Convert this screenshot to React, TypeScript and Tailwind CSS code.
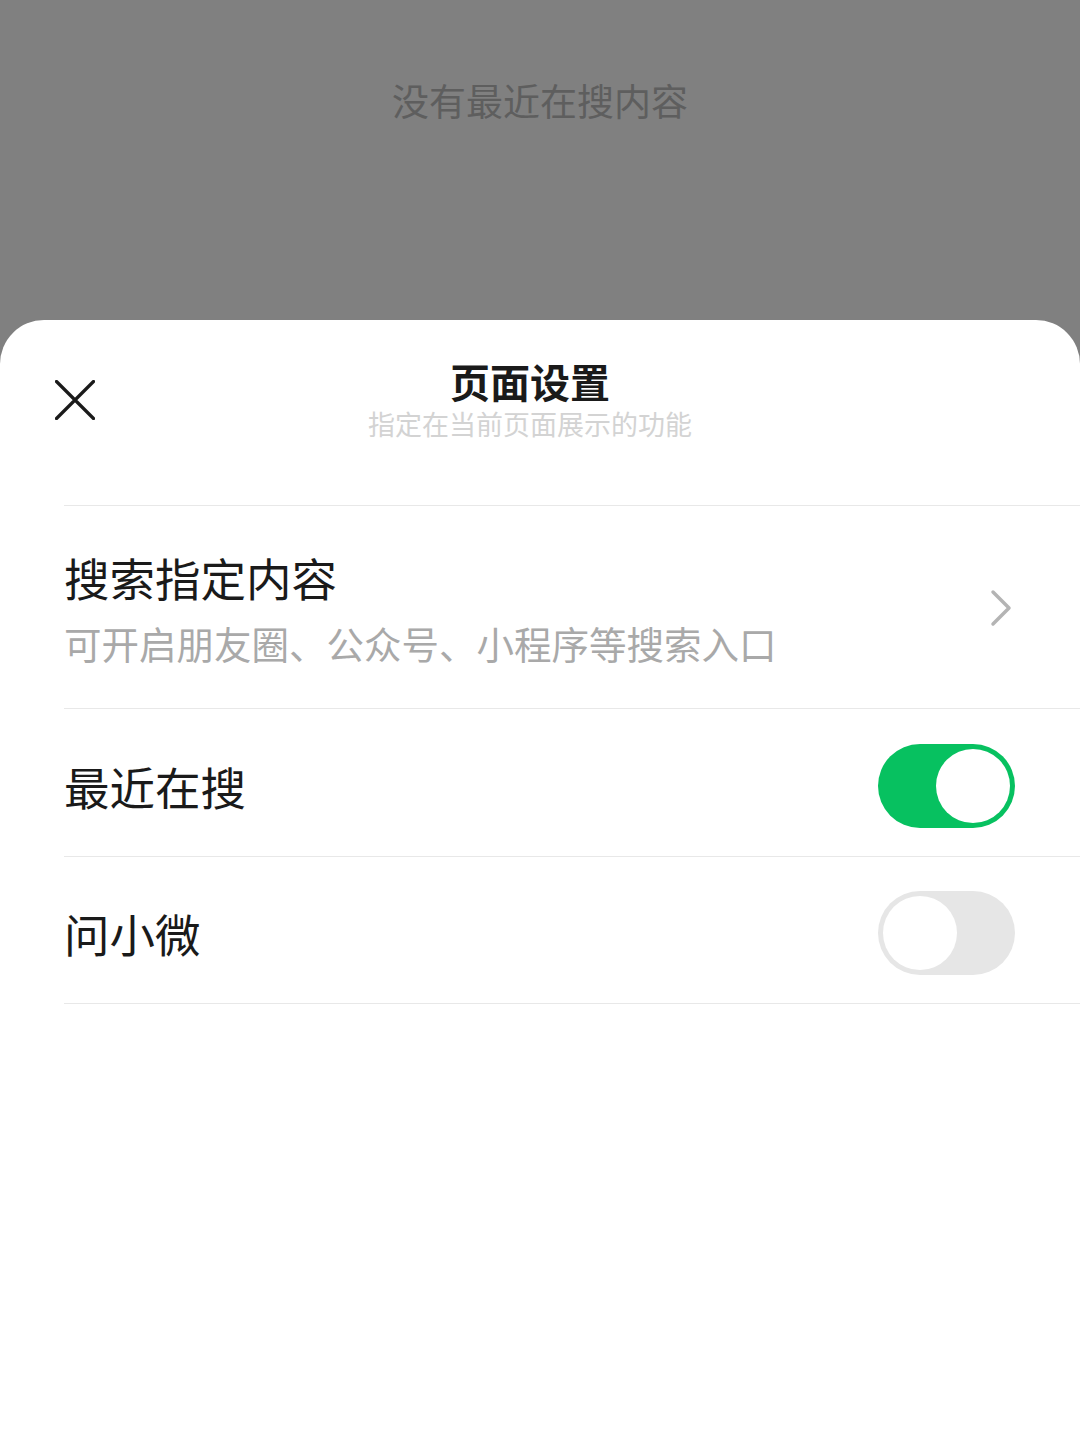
import { useState } from "react";

function Toggle({ on, onChange }: { on: boolean; onChange: () => void }) {
  return (
    <button
      onClick={onChange}
      aria-pressed={on}
      className={`flex h-[84px] w-[137px] shrink-0 items-center rounded-full p-[5px] ${
        on ? "justify-end bg-[#07c160]" : "justify-start bg-[#e6e6e6]"
      }`}
    >
      <span className="block h-[74px] w-[74px] rounded-full bg-white" />
    </button>
  );
}

export default function App() {
  const [recent, setRecent] = useState(true);
  const [askWei, setAskWei] = useState(false);

  return (
    <div className="flex min-h-[1440px] flex-col bg-[#808080] font-['Noto_Sans_CJK_SC',sans-serif]">
      {/* Dimmed page behind the sheet */}
      <div className="h-[320px] pt-[74px] text-center text-[37px] leading-[52px] text-[#5e5e5e]">
        没有最近在搜内容
      </div>

      {/* Bottom sheet */}
      <div className="flex-1 rounded-t-[44px] bg-white">
        {/* Header */}
        <div className="flex h-[185px] items-start pt-[37px]">
          <div className="flex h-[86px] w-[150px] items-center pl-[55px]">
            <svg width="40" height="40" viewBox="0 0 40 40" fill="none">
              <path
                d="M1.5 1.5L38.5 38.5M38.5 1.5L1.5 38.5"
                stroke="#1a1a1a"
                strokeWidth="3.2"
                strokeLinecap="round"
              />
            </svg>
          </div>
          <div className="flex flex-1 flex-col items-center">
            <h1 className="text-[40px] font-bold leading-[48px] text-[#1a1a1a]">
              页面设置
            </h1>
            <p className="text-[27px] leading-[38px] text-[#d3d3d3]">
              指定在当前页面展示的功能
            </p>
          </div>
          <div className="w-[170px]" />
        </div>

        {/* Rows */}
        <div className="ml-[64px]">
          <div className="border-t border-[#e8e8e8]" />

          <div className="flex items-center border-b border-[#e8e8e8] pb-[39px] pt-[41px] pr-[68px]">
            <div className="flex flex-1 flex-col">
              <span className="text-[45.5px] leading-[60px] text-[#1a1a1a]">
                搜索指定内容
              </span>
              <span className="mt-[10px] text-[37.5px] leading-[52px] text-[#a9a9a9]">
                可开启朋友圈、公众号、小程序等搜索入口
              </span>
            </div>
            <svg width="22" height="38" viewBox="0 0 22 38" fill="none">
              <path
                d="M3 3L19 19L3 35"
                stroke="#b4b4b4"
                strokeWidth="3.5"
                strokeLinecap="round"
                strokeLinejoin="round"
              />
            </svg>
          </div>

          <div className="flex h-[148px] items-center border-b border-[#e8e8e8] pr-[65px] pt-[6px]">
            <span className="flex-1 text-[45.5px] leading-[60px] text-[#1a1a1a]">
              最近在搜
            </span>
            <Toggle on={recent} onChange={() => setRecent(!recent)} />
          </div>

          <div className="flex h-[147px] items-center border-b border-[#e8e8e8] pr-[65px] pt-[6px]">
            <span className="flex-1 text-[45.5px] leading-[60px] text-[#1a1a1a]">
              问小微
            </span>
            <Toggle on={askWei} onChange={() => setAskWei(!askWei)} />
          </div>
        </div>
      </div>
    </div>
  );
}
